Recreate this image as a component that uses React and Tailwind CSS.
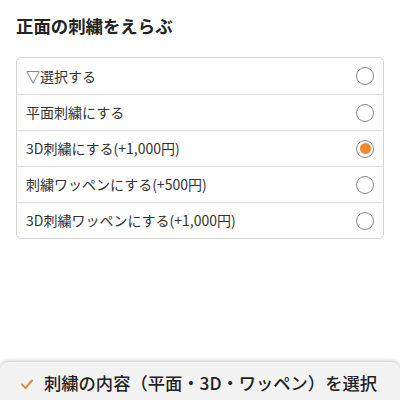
import React from 'react'
import { useState } from 'react'

const options = [
  '▽選択する',
  '平面刺繍にする',
  '3D刺繍にする(+1,000円)',
  '刺繍ワッペンにする(+500円)',
  '3D刺繍ワッペンにする(+1,000円)',
]

function App() {
  const [selected, setSelected] = useState(2)

  return (
    <div className="w-[400px] h-[400px] bg-white relative overflow-hidden text-[#333]" style={{ fontFamily: '"Noto Sans CJK JP", "Noto Sans", sans-serif' }}>
      {/* Heading */}
      <h2 className="px-4 pt-[13px] text-[17.4px] font-bold leading-[26px] text-[#222]">正面の刺繍をえらぶ</h2>

      {/* Options */}
      <div className="mx-4 mt-[18px] border border-[#d4d4d4] rounded-[5px]">
        {options.map((label, i) => (
          <div
            key={i}
            onClick={() => setSelected(i)}
            className={'flex items-center justify-between h-[36px] pl-[9px] pr-[9px] ' + (i > 0 ? 'border-t border-[#dcdcdc]' : '')}
          >
            <span className="text-[14px] text-[#333]">{label}</span>
            {/* Radio */}
            <span className="w-[18px] h-[18px] rounded-full border border-[#888] flex items-center justify-center bg-white">
              {selected === i && <span className="w-[11px] h-[11px] rounded-full bg-[#ee8a2d]"></span>}
            </span>
          </div>
        ))}
      </div>

      {/* Bottom bar */}
      <div className="absolute left-0 right-0 top-[362px] h-[50px] bg-[#f2f2f2] rounded-t-[8px] shadow-[0_-1px_4px_rgba(0,0,0,0.25)] flex items-start pt-[10px] pl-[20px]">
        <svg width="14" height="14" viewBox="0 0 14 14" className="mt-[5px]">
          <path d="M2 7.5 L5.5 11 L12 3.5" fill="none" stroke="#e58a3a" strokeWidth="2" strokeLinecap="round" strokeLinejoin="round" />
        </svg>
        <span className="ml-[10px] text-[17.3px] font-medium text-[#222] leading-[22px]">刺繍の内容（平面・3D・ワッペン）を選択</span>
      </div>
    </div>
  )
}

export default App
